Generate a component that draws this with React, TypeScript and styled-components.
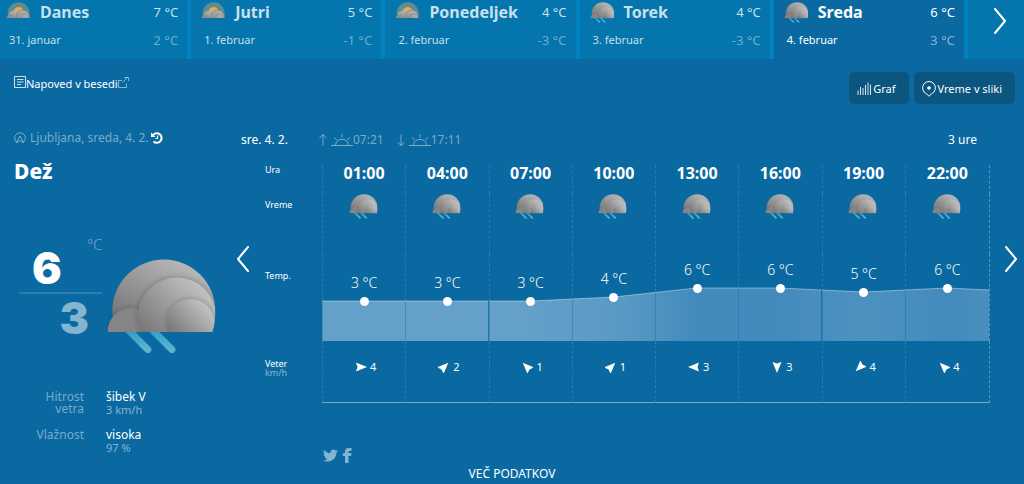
import React, { useId } from "react";
import styled, { createGlobalStyle } from "styled-components";
import { FaTwitter } from "react-icons/fa";

const colors = {
  page: "#0a69a1",
  tab: "#0576ad",
  tabGap: "#0083c0",
  button: "#0b557f",
  soft: "rgba(255, 255, 255, 0.5)",
  faint: "rgba(255, 255, 255, 0.45)",
  pale: "rgba(255, 255, 255, 0.78)",
};

const GlobalStyle = createGlobalStyle`
  *, *::before, *::after { box-sizing: border-box; }
  body {
    margin: 0;
    background: ${colors.page};
    color: #fff;
    font: 400 12px/16px "Noto Sans", "Open Sans", sans-serif;
  }
  button { font: inherit; color: inherit; border: 0; padding: 0; background: none; cursor: pointer; }
  h1, h2, p, dl, dd, dt { margin: 0; }
  svg { display: block; flex: none; }
`;

const Page = styled.div`
  overflow: hidden;
`;

const DayTabs = styled.nav`
  display: grid;
  grid-template-columns: 187fr repeat(4, 190fr) 56fr;
  column-gap: 4px;
  height: 59px;
  background: ${colors.tabGap};
`;

const DayTab = styled.button<{ $active?: boolean; $first?: boolean }>`
  display: grid;
  grid-template-columns: auto 1fr auto;
  grid-template-rows: 24px 32px;
  align-items: center;
  padding: 0 9px 0 ${(p) => (p.$first ? 6 : 10)}px;
  text-align: left;
  background: ${(p) => (p.$active ? colors.page : colors.tab)};
  color: ${(p) => (p.$active ? "#fff" : colors.pale)};
`;

const TabIcon = styled.span`
  width: 34px;
`;

const TabName = styled.span`
  font-size: 16px;
  font-weight: 700;
`;

const TabDate = styled.span`
  grid-column: 1 / 3;
  padding-left: 3px;
  font-size: 11px;
`;

const TabTemp = styled.span<{ $low?: boolean }>`
  text-align: right;
  font-size: 13px;
  opacity: ${(p) => (p.$low ? 0.5 : 1)};
`;

const NextDays = styled.button`
  display: grid;
  place-items: start center;
  padding: 8px 0 0 8px;
  background: ${colors.tab};
`;

const Toolbar = styled.div`
  display: flex;
  justify-content: space-between;
  padding: 13px 9px 0 14px;
`;

const TextLink = styled.a`
  display: flex;
  align-items: flex-start;
  height: 24px;
  padding-top: 4px;
  color: #fff;
  font-size: 11px;
  text-decoration: none;
`;

const ToolButtons = styled.div`
  display: flex;
  gap: 5px;
`;

const ToolButton = styled.button`
  display: flex;
  align-items: center;
  gap: 2px;
  height: 32px;
  padding: 1px 13px 0 8px;
  border-radius: 5px;
  background: ${colors.button};
  font-size: 11px;
`;

const Content = styled.main`
  display: grid;
  grid-template-columns: 237px 1fr;
  padding: 26px 7px 0 0;
`;

const Current = styled.section`
  padding-left: 14px;
`;

const Place = styled.div`
  display: flex;
  align-items: center;
  height: 16px;
  gap: 4px;
  color: ${colors.faint};
  font-size: 12px;
`;

const ResetButton = styled.button`
  margin-left: -2px;
  color: #fff;
`;

const Condition = styled.h1`
  margin-top: 12px;
  font-size: 21px;
  line-height: 26px;
  font-weight: 800;
`;

const Summary = styled.div`
  display: flex;
  align-items: flex-start;
  gap: 4px;
  margin-top: 52px;
  padding-left: 5px;
`;

const Extremes = styled.div`
  width: 83px;
  font: 900 44px/36px Inter, "Noto Sans", sans-serif;
`;

const Unit = styled.div`
  height: 14px;
  color: ${colors.faint};
  font: 300 14px/18px "Noto Sans", sans-serif;
  text-align: right;
`;

const High = styled.div`
  padding: 0 0 6px 13px;
  border-bottom: 2px solid rgba(255, 255, 255, 0.15);
`;

const Low = styled.div`
  padding: 6px 13px 0 0;
  color: ${colors.soft};
  text-align: right;
`;

const SummaryIcon = styled.div`
  padding-top: 22px;
`;

const Details = styled.dl`
  display: grid;
  grid-template-columns: 70px 1fr;
  gap: 13px 22px;
  margin-top: 37px;
  font-size: 12px;
  line-height: 12px;
`;

const DetailName = styled.dt`
  padding-left: 20px;
  color: ${colors.faint};
  text-align: right;
`;

const DetailNote = styled.div`
  color: ${colors.soft};
  font-size: 11px;
  line-height: 13px;
`;

const ForecastHead = styled.div`
  display: flex;
  align-items: center;
  height: 20px;
  padding: 0 40px 0 4px;
`;

const ForecastDate = styled.h2`
  width: 77px;
  font-size: 12px;
  font-weight: 400;
`;

const SunTime = styled.span`
  display: flex;
  align-items: center;
  margin-right: 12px;
  color: ${colors.faint};
  font-size: 12px;
  & > :first-child { margin-right: 3px; }
`;

const Interval = styled.span`
  margin-left: auto;
`;

const Slider = styled.div`
  display: flex;
  align-items: flex-start;
  margin-top: 15px;
`;

const SlideButton = styled.button`
  width: 12px;
  padding-top: 81px;
`;

const Hours = styled.table`
  flex: 1;
  min-width: 0;
  margin: 0 15px 0 16px;
  table-layout: fixed;
  border-collapse: separate;
  border-spacing: 0;
  text-align: center;
`;

const LabelColumn = styled.col`
  width: 57px;
`;

const LastColumn = styled.col`
  width: calc((100% - 57px) / 8 - 1px);
`;

const Cell = styled.td`
  padding: 0;
  vertical-align: top;
  border-left: 1px dashed rgba(255, 255, 255, 0.13);
  &:last-child { border-right: 1px dashed rgba(255, 255, 255, 0.3); }
  tr:last-child > & { border-bottom: 1px solid ${colors.faint}; }
`;

const RowLabel = styled.th`
  padding: 0;
  vertical-align: top;
  text-align: left;
  font-size: 9px;
  line-height: 9px;
  font-weight: 400;
`;

const HourCell = styled(Cell).attrs({ as: "th", scope: "col" })`
  height: 29px;
  font-size: 16px;
  line-height: 16px;
  font-weight: 700;
`;

const IconCell = styled(Cell)`
  height: 60px;
  padding-right: 2px;
  & > svg { margin: 0 auto; }
`;

const TempCell = styled(Cell)`
  height: 87px;
`;

const TempStack = styled.div`
  position: relative;
  height: 87px;
`;

const AreaChart = styled.svg`
  position: absolute;
  top: 0;
  left: -1px;
  width: calc(100% + 1px);
  height: 87px;
`;

const TempMark = styled.div`
  position: relative;
  display: flex;
  flex-direction: column;
  align-items: center;
  gap: 6px;
  font-size: 14px;
  font-weight: 300;
  line-height: 16px;
`;

const Dot = styled.span`
  width: 9px;
  height: 9px;
  border-radius: 50%;
  background: #fff;
`;

const WindCell = styled(Cell)`
  height: 62px;
  padding-top: 18px;
`;

const Wind = styled.div`
  display: flex;
  justify-content: center;
  align-items: center;
  gap: 3px;
  padding-left: 3px;
  font-size: 11px;
`;

const Muted = styled.span`
  color: ${colors.soft};
`;

const LabelText = styled.div<{ $top: number }>`
  padding-top: ${(p) => p.$top}px;
`;

const Social = styled.div`
  display: flex;
  align-items: center;
  gap: 5px;
  padding: 45px 0 0 86px;
`;

const SocialLink = styled.a`
  color: ${colors.soft};
`;

const Footer = styled.footer`
  display: flex;
  justify-content: center;
  padding-top: 2px;
  font-size: 12px;
`;

const MoreButton = styled.button`
  line-height: 18px;
`;

function RainCloud({ width, height }: { width: number; height: number }) {
  const id = useId();
  return (
    <svg width={width} height={height} viewBox="318 100 332 286" aria-hidden="true">
      <defs>
        <linearGradient id={`${id}a`} x1="0.75" y1="0" x2="0.3" y2="0.8">
          <stop offset="0" stopColor="#bbb" />
          <stop offset="1" stopColor="#707070" />
        </linearGradient>
        <linearGradient id={`${id}b`} x1="0.9" y1="0.15" x2="0.15" y2="0.85">
          <stop offset="0" stopColor="#c4c4c4" />
          <stop offset="1" stopColor="#747474" />
        </linearGradient>
        <linearGradient id={`${id}c`} x1="0" y1="0" x2="0" y2="1">
          <stop offset="0" stopColor="#2e9fc0" />
          <stop offset="1" stopColor="#5db4d0" />
        </linearGradient>
        <clipPath id={`${id}d`}>
          <path d="M310 90H491A154 154 0 0 1 645 258Q645 292 636 321H310Z" />
        </clipPath>
        <filter id={`${id}e`} x="-20%" y="-20%" width="140%" height="140%">
          <feDropShadow dx="0" dy="0" stdDeviation="8" floodColor="#333" floodOpacity="0.4" />
        </filter>
      </defs>
      <g stroke={`url(#${id}c)`} strokeWidth="21" strokeLinecap="round">
        <path d="M385 315L443 373" />
        <path d="M457 315L515 373" />
      </g>
      <g clipPath={`url(#${id}d)`}>
        <circle cx="491" cy="258" r="154" fill={`url(#${id}a)`} />
        <g filter={`url(#${id}e)`}>
          <circle cx="393" cy="319" r="70" fill="#858585" />
        </g>
        <g filter={`url(#${id}e)`}>
          <circle cx="530" cy="275" r="117" fill={`url(#${id}b)`} />
        </g>
        <g filter={`url(#${id}e)`}>
          <circle cx="571" cy="293" r="71" fill={`url(#${id}b)`} />
        </g>
      </g>
    </svg>
  );
}

function SunCloud() {
  const id = useId();
  return (
    <svg width="24" height="20" viewBox="0 0 72 60" aria-hidden="true">
      <defs>
        <clipPath id={`${id}a`}>
          <path d="M0 0H72V48H0Z" />
        </clipPath>
        <linearGradient id={`${id}b`} x1="0.8" y1="0" x2="0.2" y2="1">
          <stop offset="0" stopColor="#b8b8b8" />
          <stop offset="1" stopColor="#858585" />
        </linearGradient>
      </defs>
      <g clipPath={`url(#${id}a)`}>
        <circle cx="38" cy="34" r="33" fill="#5d8d90" />
        <circle cx="38" cy="29" r="14" fill="#f0a94e" />
        <circle cx="25" cy="43" r="18" fill={`url(#${id}b)`} />
        <circle cx="14" cy="50" r="12" fill="#8e8e8e" />
        <circle cx="50" cy="44" r="20" fill={`url(#${id}b)`} stroke="#7d7d7d" strokeWidth="2" />
        <circle cx="56" cy="49" r="13" fill={`url(#${id}b)`} stroke="#7d7d7d" strokeWidth="2" />
      </g>
    </svg>
  );
}

function Chevron({ left }: { left?: boolean }) {
  return (
    <svg width="12" height="26" viewBox="0 0 12 26" fill="none" stroke="#fff" strokeWidth="2" strokeLinecap="round" strokeLinejoin="round" aria-hidden="true">
      <path d={left ? "M11 1L1 13L11 25" : "M1 1L11 13L1 25"} />
    </svg>
  );
}

function SunHorizon() {
  return (
    <svg width="22" height="12" viewBox="0 0 22 12" fill="none" stroke="currentColor" aria-hidden="true">
      <path d="M0 11.500H22M4.500 11C5 3.500 17 3.500 17.500 11M11 0V3.500M3 3.500L6 6M19 3.500L16 6" />
    </svg>
  );
}

function Arrow({ down }: { down?: boolean }) {
  return (
    <svg width="10" height="12" viewBox="0 0 10 12" fill="none" stroke="currentColor" aria-hidden="true">
      <path d={down ? "M5 0.500V11.500M1.500 8L5 11.500L8.500 8" : "M5 11.500V0.500M1.500 4L5 0.500L8.500 4"} />
    </svg>
  );
}

function WindArrow({ angle }: { angle: number }) {
  return (
    <svg width="12" height="12" viewBox="-6 -6 12 12" aria-hidden="true">
      <path d="M-5 -4.500L6 0L-5 4.500L-3.500 0Z" fill="#fff" transform={`rotate(${angle})`} />
    </svg>
  );
}

const days = [
  { name: "Danes", date: "31. januar", high: 7, low: 2, rain: false },
  { name: "Jutri", date: "1. februar", high: 5, low: -1, rain: false },
  { name: "Ponedeljek", date: "2. februar", high: 4, low: -3, rain: false },
  { name: "Torek", date: "3. februar", high: 4, low: -3, rain: true },
  { name: "Sreda", date: "4. februar", high: 6, low: 3, rain: true },
];

const hours = [
  { time: "01:00", temp: 3, wind: 4, angle: 0 },
  { time: "04:00", temp: 3, wind: 2, angle: -45 },
  { time: "07:00", temp: 3, wind: 1, angle: -135 },
  { time: "10:00", temp: 4, wind: 1, angle: -45 },
  { time: "13:00", temp: 6, wind: 3, angle: 180 },
  { time: "16:00", temp: 6, wind: 3, angle: 90 },
  { time: "19:00", temp: 5, wind: 4, angle: 135 },
  { time: "22:00", temp: 6, wind: 4, angle: -135 },
];
const nextTemp = 5;

const areaColors: Record<number, [number, number, number]> = {
  3: [100, 160, 200],
  4: [90, 154, 197],
  5: [76, 146, 192],
  6: [67, 139, 189],
};

const levelY = (temp: number) => 60 - Math.round(temp * 4.33);
const rgb = (temp: number) => `rgb(${areaColors[temp].join(",")})`;
const mix = (a: number, b: number) =>
  `rgb(${areaColors[a].map((v, i) => Math.round((v + areaColors[b][i]) / 2)).join(",")})`;

function AreaSlice({ prev, temp, next }: { prev: number; temp: number; next: number }) {
  const id = useId();
  const left = (levelY(prev) + levelY(temp)) / 2;
  const right = (levelY(next) + levelY(temp)) / 2;
  const line = `M0 ${left}L42 ${levelY(temp)}L84 ${right}`;
  return (
    <AreaChart viewBox="0 0 84 87" preserveAspectRatio="none" aria-hidden="true">
      <defs>
        <linearGradient id={id}>
          <stop offset="0" stopColor={mix(prev, temp)} />
          <stop offset="0.5" stopColor={rgb(temp)} />
          <stop offset="1" stopColor={mix(temp, next)} />
        </linearGradient>
      </defs>
      <path d={`${line}V87H0Z`} fill={`url(#${id})`} />
      <path d={line} fill="none" stroke="rgba(255,255,255,0.4)" />
      <path d={`M0.500 ${left}V87`} stroke={colors.page} strokeOpacity="0.35" />
    </AreaChart>
  );
}

export default function App() {
  return (
    <Page>
      <GlobalStyle />
      <DayTabs aria-label="Dnevi">
        {days.map((day, i) => (
          <DayTab key={day.name} $active={i === 4} $first={i === 0}>
            <TabIcon>{day.rain ? <RainCloud width={25} height={21} /> : <SunCloud />}</TabIcon>
            <TabName>{day.name}</TabName>
            <TabTemp>{day.high} °C</TabTemp>
            <TabDate>{day.date}</TabDate>
            <TabTemp $low>{day.low} °C</TabTemp>
          </DayTab>
        ))}
        <NextDays aria-label="Naslednji dnevi">
          <Chevron />
        </NextDays>
      </DayTabs>

      <Toolbar>
        <TextLink href="#besedilo">
          <svg width="12" height="12" viewBox="0 0 12 12" fill="none" stroke="#fff" strokeOpacity="0.8" aria-hidden="true">
            <path d="M0.500 0.500H11.500V11.500H0.500ZM3 3.500H9.500M3 6H9.500M3 8.500H7" />
          </svg>
          Napoved v besedi
          <svg width="11" height="12" viewBox="0 0 11 12" fill="none" stroke="#fff" strokeOpacity="0.5" aria-hidden="true">
            <path d="M4 4.500H0.500V11.500H8.500V7.500M4.500 6.500L10 1M6 1.500H10.500V5" />
          </svg>
        </TextLink>
        <ToolButtons>
          <ToolButton>
            <svg width="14" height="13" viewBox="0 0 14 13" fill="none" stroke="#fff" strokeOpacity="0.85" aria-hidden="true">
              <path d="M1 13V8.500M3.500 13V5M6 13V6M8.500 13V3M11 13V0.500M13.500 13V2.500" />
            </svg>
            Graf
          </ToolButton>
          <ToolButton>
            <svg width="14" height="16" viewBox="0 0 14 16" fill="none" stroke="#fff" aria-hidden="true">
              <path d="M7 15.300L4.500 12.800A6.400 6.400 0 1 1 9.500 12.800Z" />
              <circle cx="7" cy="7" r="1.800" fill="#fff" stroke="none" />
            </svg>
            Vreme v sliki
          </ToolButton>
        </ToolButtons>
      </Toolbar>

      <Content>
        <Current>
          <Place>
            <svg width="12" height="12" viewBox="0 0 12 12" fill="none" stroke="currentColor" aria-hidden="true">
              <path d="M3 10.500A5.300 5.300 0 1 1 9 10.500M2.500 10.500L6 4L9.500 10.500L6 8.500Z" />
            </svg>
            Ljubljana, sreda, 4. 2.
            <ResetButton aria-label="Ponastavi">
              <svg width="12" height="12" viewBox="0 0 12 12" fill="none" stroke="#fff" strokeWidth="2" aria-hidden="true">
                <path d="M2 3A4.800 4.800 0 1 1 2.500 9.500" />
                <path d="M0 0.500V5H4.500Z" fill="#fff" stroke="none" />
                <path d="M6.500 3.500V6.500H4.500" strokeWidth="1.200" />
              </svg>
            </ResetButton>
          </Place>
          <Condition>Dež</Condition>
          <Summary>
            <Extremes>
              <Unit>°C</Unit>
              <High>6</High>
              <Low>3</Low>
            </Extremes>
            <SummaryIcon>
              <RainCloud width={111} height={96} />
            </SummaryIcon>
          </Summary>
          <Details>
            <DetailName>Hitrost vetra</DetailName>
            <dd>
              šibek V<DetailNote>3 km/h</DetailNote>
            </dd>
            <DetailName>Vlažnost</DetailName>
            <dd>
              visoka<DetailNote>97 %</DetailNote>
            </dd>
          </Details>
        </Current>

        <section>
          <ForecastHead>
            <ForecastDate>sre. 4. 2.</ForecastDate>
            <SunTime>
              <Arrow />
              <SunHorizon />
              07:21
            </SunTime>
            <SunTime>
              <Arrow down />
              <SunHorizon />
              17:11
            </SunTime>
            <Interval>3 ure</Interval>
          </ForecastHead>
          <Slider>
            <SlideButton aria-label="Prejšnje ure">
              <Chevron left />
            </SlideButton>
            <Hours>
              <colgroup>
                <LabelColumn />
                <col span={7} />
                <LastColumn />
              </colgroup>
              <tbody>
                <tr>
                  <RowLabel scope="row">Ura</RowLabel>
                  {hours.map((h) => (
                    <HourCell key={h.time}>{h.time}</HourCell>
                  ))}
                </tr>
                <tr>
                  <RowLabel scope="row">
                    <LabelText $top={6}>Vreme</LabelText>
                  </RowLabel>
                  {hours.map((h) => (
                    <IconCell key={h.time}>
                      <RainCloud width={29} height={25} />
                    </IconCell>
                  ))}
                </tr>
                <tr>
                  <RowLabel scope="row">
                    <LabelText $top={17}>Temp.</LabelText>
                  </RowLabel>
                  {hours.map((h, i) => (
                    <TempCell key={h.time}>
                      <TempStack>
                        <AreaSlice
                          prev={hours[i - 1]?.temp ?? h.temp}
                          temp={h.temp}
                          next={hours[i + 1]?.temp ?? nextTemp}
                        />
                        <TempMark style={{ paddingTop: levelY(h.temp) - 26 }}>
                          {h.temp} °C
                          <Dot />
                        </TempMark>
                      </TempStack>
                    </TempCell>
                  ))}
                </tr>
                <tr>
                  <RowLabel scope="row">
                    <LabelText $top={18}>
                      Veter
                      <br />
                      <Muted>km/h</Muted>
                    </LabelText>
                  </RowLabel>
                  {hours.map((h) => (
                    <WindCell key={h.time}>
                      <Wind>
                        <WindArrow angle={h.angle} />
                        {h.wind}
                      </Wind>
                    </WindCell>
                  ))}
                </tr>
              </tbody>
            </Hours>
            <SlideButton aria-label="Naslednje ure">
              <Chevron />
            </SlideButton>
          </Slider>
          <Social>
            <SocialLink href="#twitter" aria-label="Twitter">
              <FaTwitter size={15} />
            </SocialLink>
            <SocialLink href="#facebook" aria-label="Facebook">
              <svg width="9" height="15" viewBox="0 0 9 15" fill="currentColor" aria-hidden="true">
                <path d="M2 15V8H0V5H2V3.500C2 1 3.500 0 5.500 0H8.500V3H6.500C5.800 3 5.500 3.300 5.500 4V5H8.500L8 8H5.500V15Z" />
              </svg>
            </SocialLink>
          </Social>
        </section>
      </Content>
      <Footer>
        <MoreButton>VEČ PODATKOV</MoreButton>
      </Footer>
    </Page>
  );
}
